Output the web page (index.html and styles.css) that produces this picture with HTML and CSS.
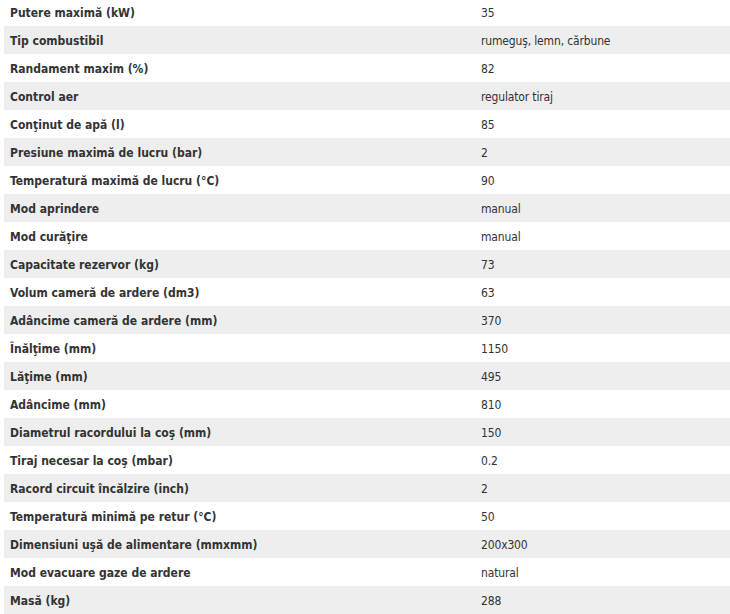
FILE: index.html
```html
<!DOCTYPE html>
<html lang="ro">
<head>
<meta charset="utf-8">
<title>Specificații</title>
<link rel="stylesheet" href="styles.css">
</head>
<body>
<div class="wrap">
<table class="specs">
<tbody>
<tr><th>Putere maximă (kW)</th><td>35</td></tr>
<tr><th>Tip combustibil</th><td>rumeguş, lemn, cărbune</td></tr>
<tr><th>Randament maxim (%)</th><td>82</td></tr>
<tr><th>Control aer</th><td>regulator tiraj</td></tr>
<tr><th>Conţinut de apă (l)</th><td>85</td></tr>
<tr><th>Presiune maximă de lucru (bar)</th><td>2</td></tr>
<tr><th>Temperatură maximă de lucru (°C)</th><td>90</td></tr>
<tr><th>Mod aprindere</th><td>manual</td></tr>
<tr><th>Mod curăţire</th><td>manual</td></tr>
<tr><th>Capacitate rezervor (kg)</th><td>73</td></tr>
<tr><th>Volum cameră de ardere (dm3)</th><td>63</td></tr>
<tr><th>Adâncime cameră de ardere (mm)</th><td>370</td></tr>
<tr><th>Înălţime (mm)</th><td>1150</td></tr>
<tr><th>Lăţime (mm)</th><td>495</td></tr>
<tr><th>Adâncime (mm)</th><td>810</td></tr>
<tr><th>Diametrul racordului la coş (mm)</th><td>150</td></tr>
<tr><th>Tiraj necesar la coş (mbar)</th><td>0.2</td></tr>
<tr><th>Racord circuit încălzire (inch)</th><td>2</td></tr>
<tr><th>Temperatură minimă pe retur (°C)</th><td>50</td></tr>
<tr><th>Dimensiuni uşă de alimentare (mmxmm)</th><td>200x300</td></tr>
<tr><th>Mod evacuare gaze de ardere</th><td>natural</td></tr>
<tr><th>Masă (kg)</th><td>288</td></tr>
</tbody>
</table>
</div>
</body>
</html>
```

FILE: styles.css
```css
html, body {
  margin: 0;
  padding: 0;
  background: #ffffff;
}
body {
  overflow: hidden;
}
.wrap {
  padding-left: 4px;
  margin-top: -2px;
}
.specs {
  width: 726px;
  border-collapse: collapse;
  font-family: "DejaVu Sans Condensed", "DejaVu Sans", Verdana, sans-serif;
  color: #333333;
}
.specs tr {
  height: 28px;
}
.specs tr:nth-child(even) {
  background: #eeeeee;
}
.specs th {
  width: 466px;
  padding: 2px 0 0 6px;
  text-align: left;
  font-weight: bold;
  font-size: 12px;
  vertical-align: middle;
}
.specs td {
  padding: 2px 0 0 5px;
  font-size: 12px;
  letter-spacing: -0.15px;
  vertical-align: middle;
}
```
